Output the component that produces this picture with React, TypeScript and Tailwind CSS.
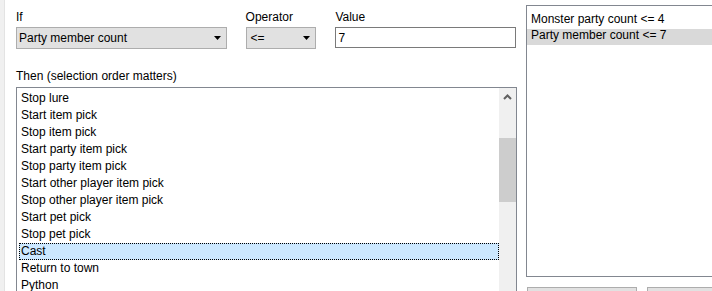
import React from "react";

const actions = [
  "Stop lure",
  "Start item pick",
  "Stop item pick",
  "Start party item pick",
  "Stop party item pick",
  "Start other player item pick",
  "Stop other player item pick",
  "Start pet pick",
  "Stop pet pick",
  "Cast",
  "Return to town",
  "Python",
];

const conditions = ["Monster party count <= 4", "Party member count <= 7"];

function DropArrow() {
  return (
    <svg width="7" height="4" viewBox="0 0 7 4" className="shrink-0">
      <path d="M0 0h7L3.5 4z" fill="#000" />
    </svg>
  );
}

function Combo({ value, className }: { value: string; className: string }) {
  return (
    <div
      className={`flex h-[22px] items-center justify-between border border-[#adadad] bg-[#e1e1e1] pr-[5px] ${className}`}
    >
      <span className="leading-4">{value}</span>
      <DropArrow />
    </div>
  );
}

export default function App() {
  const selected = 9;
  return (
    <div
      className="flex h-[291px] w-[712px] overflow-hidden bg-white text-[12px] text-black"
      style={{ fontFamily: '"Liberation Sans", Arial, sans-serif' }}
    >
      <div className="w-[5px] shrink-0 border-r border-[#e3e3e3] bg-[#f0f0f0]" />

      <div className="flex w-[511px] shrink-0 flex-col pl-[11px] pt-[9px]">
        <div className="flex gap-[19px]">
          <div className="flex w-[211px] flex-col gap-[2px]">
            <span className="leading-4">If</span>
            <Combo value="Party member count" className="pl-[2px]" />
          </div>
          <div className="flex w-[71px] flex-col gap-[2px]">
            <span className="leading-4">Operator</span>
            <Combo value="<=" className="pl-[4px]" />
          </div>
          <div className="flex w-[181px] flex-col gap-[2px]">
            <span className="leading-4">Value</span>
            <div className="flex h-[21px] items-center border border-[#7a7a7a] bg-white pl-[2px]">
              <span className="leading-4">7</span>
            </div>
          </div>
        </div>

        <span className="mt-[19px] leading-4">Then (selection order matters)</span>

        <div className="mt-[3px] flex h-[230px] w-[501px] shrink-0 border border-[#828790] bg-white">
          <div className="flex flex-1 flex-col overflow-hidden pl-[2px] pt-[2px]">
            {actions.map((a, i) => (
              <div
                key={a}
                className={`h-[17px] shrink-0 pl-[1px] leading-[15px] ${
                  i === selected
                    ? "border border-dotted border-black bg-[#cce8ff]"
                    : "border border-transparent"
                }`}
              >
                {a}
              </div>
            ))}
          </div>
          <div className="flex w-[17px] shrink-0 flex-col bg-[#f0f0f0]">
            <div className="flex h-[17px] shrink-0 items-center justify-center">
              <svg width="9" height="6" viewBox="0 0 9 6">
                <path d="M1 5L4.5 1.5L8 5" fill="none" stroke="#606060" strokeWidth="2" />
              </svg>
            </div>
            <div className="mt-[33px] h-[64px] shrink-0 bg-[#cdcdcd]" />
          </div>
        </div>
      </div>

      <div className="ml-[10px] flex shrink-0 flex-col pt-[5px]">
        <div className="flex h-[272px] w-[200px] shrink-0 flex-col border border-[#828790] bg-white pt-[7px]">
          {conditions.map((c, i) => (
            <div
              key={c}
              className={`h-[16px] shrink-0 pl-[4px] leading-[13px] ${i === 1 ? "bg-[#d9d9d9]" : ""}`}
            >
              {c}
            </div>
          ))}
        </div>
        <div className="ml-[1px] mt-[10px] flex shrink-0 gap-[10px]">
          <div className="h-[23px] w-[110px] shrink-0 border border-[#adadad] bg-[#e1e1e1]" />
          <div className="h-[23px] w-[110px] shrink-0 border border-[#adadad] bg-[#e1e1e1]" />
        </div>
      </div>
    </div>
  );
}
